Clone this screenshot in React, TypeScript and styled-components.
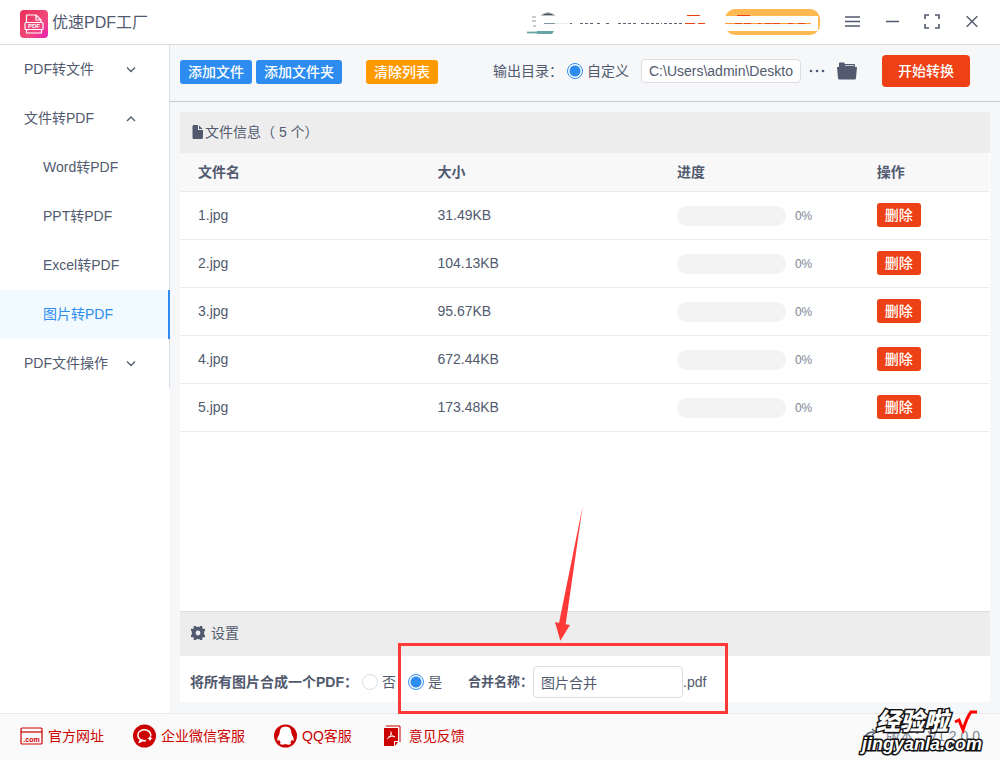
import React, { useState } from "react";
import styled, { createGlobalStyle, css } from "styled-components";

const ink = "#515a6e";
const blue = "#2d8cf0";
const danger = "#ed4014";
const brand = "#cc0000";

const GlobalStyle = createGlobalStyle`
  *, *::before, *::after { box-sizing: border-box; }
  body {
    margin: 0;
    background: #fff;
    color: ${ink};
    font: 14px/20px "Liberation Sans", "Noto Sans CJK SC", sans-serif;
  }
  button, input { font: inherit; color: inherit; }
  svg { display: block; flex: none; }
`;

const Page = styled.div`
  position: relative;
  display: flex;
  flex-direction: column;
  min-height: 100vh;
`;

const TitleBar = styled.header`
  display: flex;
  align-items: center;
  height: 45px;
  padding: 0 20px;
  border-bottom: 1px solid #dcdcdc;
`;

const Brand = styled.div`
  display: flex;
  flex: 1;
  align-items: center;
  gap: 4px;
  padding-top: 4px;
`;

const AppName = styled.h1`
  margin: 0;
  padding-bottom: 2px;
  font-size: 16px;
  font-weight: 400;
`;

const WindowControls = styled.div`
  display: flex;
  gap: 16px;
  margin: 0 -4px 0 20px;
`;

const IconButton = styled.button<{ $width?: number }>`
  display: flex;
  align-items: center;
  justify-content: center;
  width: ${(p) => p.$width ?? 24}px;
  height: 24px;
  padding: 0;
  border: 0;
  background: none;
`;

const Body = styled.div`
  display: flex;
  flex: 1;
`;

const Sidebar = styled.nav`
  flex: none;
  align-self: flex-start;
  width: 170px;
  border-right: 1px solid #dcdee2;
`;

const navItem = css`
  display: flex;
  align-items: center;
  width: 100%;
  height: 49px;
  font-size: 14px;
`;

const NavGroup = styled.button`
  ${navItem}
  justify-content: space-between;
  padding: 0 33px 2px 24px;
  border: 0;
  background: none;
`;

const NavLink = styled.a<{ $active?: boolean }>`
  ${navItem}
  padding: 0 0 2px 43px;
  color: ${(p) => (p.$active ? blue : ink)};
  text-decoration: none;
  ${(p) =>
    p.$active &&
    css`
      width: 170px;
      background: #f0faff;
      border-right: 2px solid ${blue};
    `}
`;

const Main = styled.main`
  display: flex;
  flex: 1;
  flex-direction: column;
  min-width: 0;
  background: #f5f7f9;
`;

const Toolbar = styled.div`
  display: flex;
  align-items: center;
  height: 57px;
  padding: 0 30px 4px 10px;
  border-bottom: 1px solid #c5c8ce;
`;

const ButtonGroup = styled.div`
  display: flex;
  gap: 4px;
  margin-right: 24px;
`;

const Button = styled.button<{ $color: string; $large?: boolean }>`
  height: ${(p) => (p.$large ? 32 : 24)}px;
  padding: 0 ${(p) => (p.$large ? 16 : 8)}px;
  border: 0;
  border-radius: ${(p) => (p.$large ? 4 : 3)}px;
  background: ${(p) => p.$color};
  color: #fff;
  font-weight: 500;
  line-height: 24px;
  white-space: nowrap;
`;

const ToolbarButton = styled(Button)`
  margin-top: 2px;
`;

const OutputGroup = styled.div`
  display: flex;
  align-items: center;
  margin-left: auto;
  white-space: nowrap;
`;

const OutputLabel = styled.span`
  margin-right: 4px;
`;

const RadioLabel = styled.label`
  display: flex;
  align-items: center;
  gap: 4px;
`;

const Radio = styled.input.attrs({ type: "radio" })`
  appearance: none;
  width: 16px;
  height: 16px;
  margin: 0;
  border: 1px solid #dcdee2;
  border-radius: 50%;
  background: #fff;
  &:checked {
    border-color: ${blue};
    background: radial-gradient(circle, ${blue} 5px, #fff 6px);
  }
`;

const TextInput = styled.input<{ $width: number; $height: number }>`
  width: ${(p) => p.$width}px;
  height: ${(p) => p.$height}px;
  padding: 0 7px;
  border: 1px solid #dcdee2;
  border-radius: 4px;
  background: #fff;
`;

const PathInput = styled(TextInput)`
  margin: 0 4px 0 12px;
`;

const StartButton = styled(Button)`
  margin-left: 17px;
`;

const Content = styled.div`
  display: flex;
  flex: 1;
  flex-direction: column;
  padding: 10px 10px 11px;
`;

const Panel = styled.section<{ $grow?: boolean }>`
  position: relative;
  flex: ${(p) => (p.$grow ? 1 : "none")};
  background: #fff;
`;

const PanelTitle = styled.h2<{ $divided?: boolean }>`
  display: flex;
  align-items: center;
  gap: ${(p) => (p.$divided ? 5 : 2)}px;
  height: ${(p) => (p.$divided ? 45 : 41)}px;
  margin: 0;
  padding: 0 ${(p) => (p.$divided ? 10 : 12)}px 2px;
  border-top: ${(p) => (p.$divided ? "1px solid #dcdcdc" : "0")};
  background: #ededed;
  font-size: 14px;
  font-weight: 400;
`;

const Table = styled.table`
  width: calc(100% - 1px);
  table-layout: fixed;
  border-collapse: separate;
  border-spacing: 0;
  th, td {
    padding: 0 18px;
    border-bottom: 1px solid #e8eaec;
    text-align: left;
  }
  th { height: 39px; background: #f8f8f9; font-weight: 700; }
  td { height: 48px; padding-bottom: 2px; }
`;

const Col = styled.col<{ $share?: number }>`
  width: ${(p) => (p.$share ? `${p.$share}%` : "auto")};
`;

const Progress = styled.div`
  display: flex;
  align-items: center;
  gap: 9px;
  padding-top: 2px;
  color: #808695;
  font-size: 12px;
`;

const Track = styled.div`
  width: 109px;
  height: 20px;
  border-radius: 10px;
  background: #f3f3f3;
`;

const Settings = styled.div`
  display: flex;
  align-items: center;
  height: 46px;
  padding: 6px 10px 0;
  white-space: nowrap;
`;

const Choices = styled.fieldset`
  display: flex;
  align-items: center;
  gap: 12px;
  margin: 0;
  padding: 0;
  border: 0;
`;

const Legend = styled.span`
  margin-right: -8px;
  font-weight: 700;
`;

const NameLabel = styled.label`
  margin-left: 26px;
  font-size: 13px;
  font-weight: 700;
`;

const Annotation = styled.svg`
  position: absolute;
  left: 218px;
  bottom: -14px;
  pointer-events: none;
`;

const Footer = styled.footer`
  display: flex;
  align-items: center;
  gap: 29px;
  height: 47px;
  padding: 0 20px 2px;
  border-top: 1px solid #e8eaec;
  background: #fafafa;
`;

const FooterLink = styled.a`
  display: flex;
  align-items: center;
  gap: 5px;
  color: ${brand};
  text-decoration: none;
`;

const Version = styled.span`
  display: flex;
  align-items: center;
  gap: 8px;
  margin-left: auto;
  color: #808695;
`;

const Watermark = styled.div`
  position: absolute;
  right: 12px;
  bottom: 6px;
  width: 126px;
  color: #fff;
  font-style: italic;
  font-weight: 900;
  -webkit-text-stroke: 3px #111;
  paint-order: stroke fill;
  pointer-events: none;
`;

const WatermarkTop = styled.div`
  display: flex;
  align-items: center;
  gap: 6px;
  padding-left: 14px;
  font-size: 24px;
  line-height: 24px;
`;

const WatermarkSite = styled.div`
  font-size: 18px;
  line-height: 20px;
`;

const Chevron = ({ up }: { up?: boolean }) => (
  <svg width="10" height="10" viewBox="0 0 10 10" fill="none" stroke={ink} strokeWidth="1.3">
    <path d={up ? "M1 8 5 4 9 8" : "M1 3.5 5 7.5 9 3.5"} />
  </svg>
);

const Logo = () => (
  <svg width="28" height="28" viewBox="0 0 28 28">
    <defs>
      <linearGradient id="logo" x1="0" y1="0" x2="1" y2="1">
        <stop offset="0" stopColor="#e92d55" />
        <stop offset=".6" stopColor="#ef4a7c" />
        <stop offset="1" stopColor="#ec1fb4" />
      </linearGradient>
    </defs>
    <rect width="28" height="28" rx="4" fill="url(#logo)" />
    <g fill="none" stroke="#fff" strokeWidth="1.2" strokeLinejoin="round">
      <path d="M6.500 12V5H16l5 5v2M16 5v5h5M6.500 20v3h15v-3" />
      <rect x="5" y="12.500" width="18" height="7" rx="1" />
    </g>
    <text x="14" y="18.200" fill="#fff" fontSize="6" fontWeight="700" textAnchor="middle">PDF</text>
  </svg>
);

const AccountArea = () => (
  <svg width="294" height="28" viewBox="0 0 294 28">
    <rect x="199" y="1" width="95" height="26" rx="10" fill="#ffb950" />
    <path d="M15 7.500Q22 2 29 7.500z" fill="#4a5360" stroke="#b7bdc2" />
    <path d="M1 23h27l-2 3H1z" fill="#65a5a7" />
    <path d="M1 23.500h10M1 25.500h10" stroke="#c9dcdc" />
    <rect x="10" y="8" width="282" height="15" fill="#fff" />
    <path d="M6 9h4M6 13h4M7 18h3" stroke="#c9cdd0" strokeWidth="2" />
    <path d="M18 15.500h11" stroke="#7c969d" />
    <path d="M29 15.500h14" stroke="#e8eeee" />
    <path d="M44 15.500h2M54 15.500h14M71 15.500h4M80 15.500h4M92 15.500h20M115 15.500h21M138 15.500h18" stroke="#596273" strokeDasharray="3 2" />
    <path d="M161 7.500h13M159 15.500h10M172 15.500h7M211 7.500h13" stroke="#ed4014" />
    <path d="M199 15.500h86" stroke="#ff9d32" />
    <path d="M209 15.500h16M232 15.500h3M239 15.500h8M247 15.500h9M262 15.500h5M272 15.500h8" stroke="#e64b19" strokeDasharray="7 2" />
  </svg>
);

const MenuIcon = () => (
  <svg width="16" height="12" viewBox="0 0 16 12" stroke={ink} strokeWidth="1.300">
    <path d="M1 1h15M1 5.500h15M1 10h15" />
  </svg>
);
const MinimizeIcon = () => (
  <svg width="14" height="4" viewBox="0 0 14 4" stroke={ink} strokeWidth="1.500"><path d="M1 1.500h13" /></svg>
);
const ExpandIcon = () => (
  <svg width="16" height="16" viewBox="0 0 16 16" fill="none" stroke={ink} strokeWidth="1.600">
    <path d="M1 5V1h4M11 1h4v4M15 10v4h-4M5 14H1v-4" />
  </svg>
);
const CloseIcon = () => (
  <svg width="12" height="12" viewBox="0 0 12 12" stroke={ink} strokeWidth="1.400"><path d="m.7.2 10.600 10.600M11.300.2.7 10.800" /></svg>
);
const FolderIcon = () => (
  <svg width="20" height="18" viewBox="0 0 20 18" fill={ink}>
    <path d="M2 5V1.500Q2 .5 3 .5h4l1 1.500h9q1 0 1 1v2z" />
    <path d="M0 5h20l-1 11q0 1.500-1.500 1.500h-15Q1 17.500 1 16z" />
    <path d="M8 3.500h9" stroke="#c5c8ce" />
  </svg>
);
const DotsIcon = () => (
  <svg width="16" height="4" viewBox="0 0 16 4" fill={ink}>
    <circle cx="2" cy="2" r="1.300" /><circle cx="8" cy="2" r="1.300" /><circle cx="14" cy="2" r="1.300" />
  </svg>
);
const FileIcon = () => (
  <svg width="11" height="14" viewBox="0 0 11 14" fill={ink}>
    <path d="M1.500 0H6v5h5v7.500q0 1.500-1.500 1.500h-8Q.5 14 .5 12.500v-11Q.5 0 1.500 0z" />
    <path d="M7 .5 10.700 4H7z" />
  </svg>
);
const GearIcon = () => (
  <svg width="16" height="16" viewBox="0 0 16 16">
    <circle cx="8" cy="8" r="4.300" fill="none" stroke={ink} strokeWidth="3.800" />
    <path d="M5 1v3M11 1v3M5 12v3M11 12v3M1 5h3M1 11h3M12 5h3M12 11h3" stroke={ink} strokeWidth="2.600" />
  </svg>
);

const SiteIcon = () => (
  <svg width="23" height="24" viewBox="0 0 23 24">
    <g fill="none" stroke={brand} strokeWidth="1.200">
      <rect x="1" y="4" width="21" height="16" rx="1" /><path d="M1 8h21" />
    </g>
    <text x="11.500" y="17.500" fill={brand} fontSize="7" fontWeight="700" textAnchor="middle">.com</text>
  </svg>
);
const WeChatIcon = () => (
  <svg width="23" height="24" viewBox="0 0 23 24">
    <circle cx="11.500" cy="12" r="11.500" fill={brand} />
    <path d="M16.500 14.500a6.500 5.500 0 1 0-3.500 2M7.500 15.500l-1 2.500 3.500-1.500" fill="none" stroke="#fff" strokeWidth="1.500" />
    <path d="m17 11.500 1 2 2 1-2 1-1 2-1-2-2-1 2-1z" fill="#fff" stroke={brand} strokeWidth=".4" />
  </svg>
);
const QQIcon = () => (
  <svg width="23" height="24" viewBox="0 0 23 24">
    <circle cx="11.500" cy="12" r="11.500" fill={brand} />
    <path d="M11.500 2.500c-4 0-5.800 2.800-5.800 6.100 0 2.200-2.200 4-2.400 6.600-.1 1.700.6 2.100 1.900.6.300 1.200.9 2 1.600 2.700-1 .5-1.200 1.900.5 2.100 1.600.2 3 0 4.200-.7 1.200.7 2.600.9 4.200.7 1.700-.2 1.500-1.600.5-2.100.7-.7 1.300-1.500 1.600-2.700 1.300 1.500 2 1.100 1.900-.6-.2-2.600-2.400-4.400-2.400-6.600 0-3.300-1.800-6.100-5.800-6.100z" fill="#fff" />
  </svg>
);
const FeedbackIcon = () => (
  <svg width="23" height="24" viewBox="0 0 23 24">
    <path d="M5 2h14v16" fill="none" stroke={brand} strokeWidth="1" />
    <path d="M3 4h14v13h-4v5H3zM14 18h3l-3 4z" fill={brand} />
    <path d="M9.500 7.500c1.500 0 .5 3-.2 4.300-.8 1.500-2.200 3-3.300 3M9.800 9c.5 2 2 3.800 4.200 4M7 13.200c2-.8 4-1.200 6.500-.8" fill="none" stroke="#fff" strokeWidth="1" />
  </svg>
);
const UpdateIcon = () => (
  <svg width="14" height="16" viewBox="0 0 14 16" fill="none" stroke={ink} strokeWidth="1.300">
    <path d="M1 9q2-5 9-5M8 1l4 3-4 3" />
  </svg>
);

const files = [
  { name: "1.jpg", size: "31.49KB" },
  { name: "2.jpg", size: "104.13KB" },
  { name: "3.jpg", size: "95.67KB" },
  { name: "4.jpg", size: "672.44KB" },
  { name: "5.jpg", size: "173.48KB" },
];

const footerLinks = [
  { label: "官方网址", icon: <SiteIcon /> },
  { label: "企业微信客服", icon: <WeChatIcon /> },
  { label: "QQ客服", icon: <QQIcon /> },
  { label: "意见反馈", icon: <FeedbackIcon /> },
];

export default function App() {
  const [merge, setMerge] = useState(true);
  return (
    <Page>
      <GlobalStyle />
      <TitleBar>
        <Brand>
          <Logo />
          <AppName>优速PDF工厂</AppName>
        </Brand>
        <AccountArea />
        <WindowControls>
          <IconButton aria-label="菜单"><MenuIcon /></IconButton>
          <IconButton aria-label="最小化"><MinimizeIcon /></IconButton>
          <IconButton aria-label="最大化"><ExpandIcon /></IconButton>
          <IconButton aria-label="关闭"><CloseIcon /></IconButton>
        </WindowControls>
      </TitleBar>

      <Body>
        <Sidebar>
          <NavGroup>PDF转文件<Chevron /></NavGroup>
          <NavGroup>文件转PDF<Chevron up /></NavGroup>
          {["Word转PDF", "PPT转PDF", "Excel转PDF", "图片转PDF"].map((t) => (
            <NavLink key={t} href="#" $active={t === "图片转PDF"}>{t}</NavLink>
          ))}
          <NavGroup>PDF文件操作<Chevron /></NavGroup>
        </Sidebar>

        <Main>
          <Toolbar>
            <ButtonGroup>
              <ToolbarButton $color={blue}>添加文件</ToolbarButton>
              <ToolbarButton $color={blue}>添加文件夹</ToolbarButton>
            </ButtonGroup>
            <ToolbarButton $color="#ff9900">清除列表</ToolbarButton>
            <OutputGroup>
              <OutputLabel>输出目录：</OutputLabel>
              <RadioLabel><Radio name="output" defaultChecked />自定义</RadioLabel>
              <PathInput $width={160} $height={24} aria-label="输出目录" defaultValue="C:\Users\admin\Deskto" />
              <IconButton aria-label="更多"><DotsIcon /></IconButton>
              <IconButton $width={36} aria-label="打开文件夹"><FolderIcon /></IconButton>
            </OutputGroup>
            <StartButton $color={danger} $large>开始转换</StartButton>
          </Toolbar>

          <Content>
            <Panel $grow>
              <PanelTitle><FileIcon />文件信息（ 5 个）</PanelTitle>
              <Table>
                <colgroup>
                  <Col $share={29.6} /><Col $share={29.6} /><Col $share={24.7} /><Col />
                </colgroup>
                <thead>
                  <tr><th>文件名</th><th>大小</th><th>进度</th><th>操作</th></tr>
                </thead>
                <tbody>
                  {files.map((f) => (
                    <tr key={f.name}>
                      <td>{f.name}</td>
                      <td>{f.size}</td>
                      <td><Progress><Track />0%</Progress></td>
                      <td><Button $color={danger}>删除</Button></td>
                    </tr>
                  ))}
                </tbody>
              </Table>
            </Panel>

            <Panel>
              <PanelTitle $divided><GearIcon />设置</PanelTitle>
              <Settings>
                <Choices aria-label="将所有图片合成一个PDF">
                  <Legend>将所有图片合成一个PDF：</Legend>
                  <RadioLabel><Radio name="merge" checked={!merge} onChange={() => setMerge(false)} />否</RadioLabel>
                  <RadioLabel><Radio name="merge" checked={merge} onChange={() => setMerge(true)} />是</RadioLabel>
                </Choices>
                <NameLabel htmlFor="merge-name">合并名称：</NameLabel>
                <TextInput id="merge-name" $width={150} $height={32} defaultValue="图片合并" />
                <span>.pdf</span>
              </Settings>
              <Annotation width="330" height="210" viewBox="0 0 330 210">
                <rect x="1.500" y="138.500" width="327" height="68" fill="none" stroke="#ff3838" strokeWidth="3" />
                <path d="M184.700 0 167.700 118.300 172 119l-9.700 15.700-5.300-18.700 4 1z" fill="#ff3838" />
              </Annotation>
            </Panel>
          </Content>
        </Main>
      </Body>

      <Footer>
        {footerLinks.map((l) => (
          <FooterLink key={l.label} href="#">{l.icon}{l.label}</FooterLink>
        ))}
        <Version><UpdateIcon />版本：V1.2.0.0</Version>
      </Footer>

      <Watermark>
        <WatermarkTop>
          经验啦
          <svg width="24" height="24" viewBox="0 0 24 24" fill="none" stroke="#f00" strokeWidth="3">
            <path d="M1 12l4-2 4 10Q13 7 17 2h6" />
          </svg>
        </WatermarkTop>
        <WatermarkSite>jingyanla.com</WatermarkSite>
      </Watermark>
    </Page>
  );
}
